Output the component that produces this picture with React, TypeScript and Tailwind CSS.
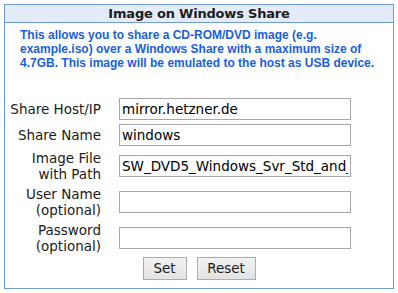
import React from 'react';

const font = { fontFamily: '"DejaVu Sans", sans-serif' };
const blueFont = { fontFamily: '"Liberation Sans", Arial, sans-serif' };

const rows: { label: string[]; value: string }[] = [
  { label: ['Share Host/IP'], value: 'mirror.hetzner.de' },
  { label: ['Share Name'], value: 'windows' },
  { label: ['Image File', 'with Path'], value: 'SW_DVD5_Windows_Svr_Std_and_DataCtr_2012_R2_64Bit_English_Core_MLF_X19-05182.ISO' },
  { label: ['User Name', '(optional)'], value: '' },
  { label: ['Password', '(optional)'], value: '' },
];

export default function App() {
  return (
    <div className="w-[398px] h-[293px] bg-white p-[4px]" style={font}>
      <div className="w-[390px] h-[285px] border border-[#6f9bd6] flex flex-col">
        <div className="h-[18px] bg-[#e3ebf8] border-b border-[#6f9bd6] flex items-center justify-center text-[13px] tracking-[-0.2px] font-bold text-[#1c1c1c] leading-none">
          Image on Windows Share
        </div>
        <p className="pl-[15px] pt-[5px] text-[12px] leading-[14px] font-bold text-[#1a5fdc] whitespace-nowrap" style={blueFont}>
          This allows you to share a CD-ROM/DVD image (e.g.
          <br />
          example.iso) over a Windows Share with a maximum size of
          <br />
          4.7GB. This image will be emulated to the host as USB device.
        </p>
        <div className="mt-[26px] grid grid-cols-[96px_1fr] text-[13.5px] text-[#1b1b1b]">
          {rows.map((r, i) => (
            <React.Fragment key={i}>
              <div className={`flex flex-col items-end justify-center leading-[16px] text-right ${r.label.length > 1 ? 'h-[36px]' : 'h-[26px]'}`}>
                {r.label.map((l, j) => (
                  <span key={j}>{l}</span>
                ))}
              </div>
              <div className="flex items-center pl-[18px]">
                <input
                  readOnly
                  value={r.value}
                  className="w-[232px] h-[22px] border border-[#a9a9a9] px-[2px] text-[13.5px] text-black outline-none bg-white"
                  style={font}
                />
              </div>
            </React.Fragment>
          ))}
        </div>
        <div className="h-[24px] flex items-center justify-center gap-[10px]">
          <button className="w-[44px] h-[23px] border border-[#adadad] bg-gradient-to-b from-[#f2f2f2] to-[#e3e3e3] text-[13.5px] text-[#1b1b1b]" style={font}>
            Set
          </button>
          <button className="w-[59px] h-[23px] border border-[#adadad] bg-gradient-to-b from-[#f2f2f2] to-[#e3e3e3] text-[13.5px] text-[#1b1b1b]" style={font}>
            Reset
          </button>
        </div>
      </div>
    </div>
  );
}
